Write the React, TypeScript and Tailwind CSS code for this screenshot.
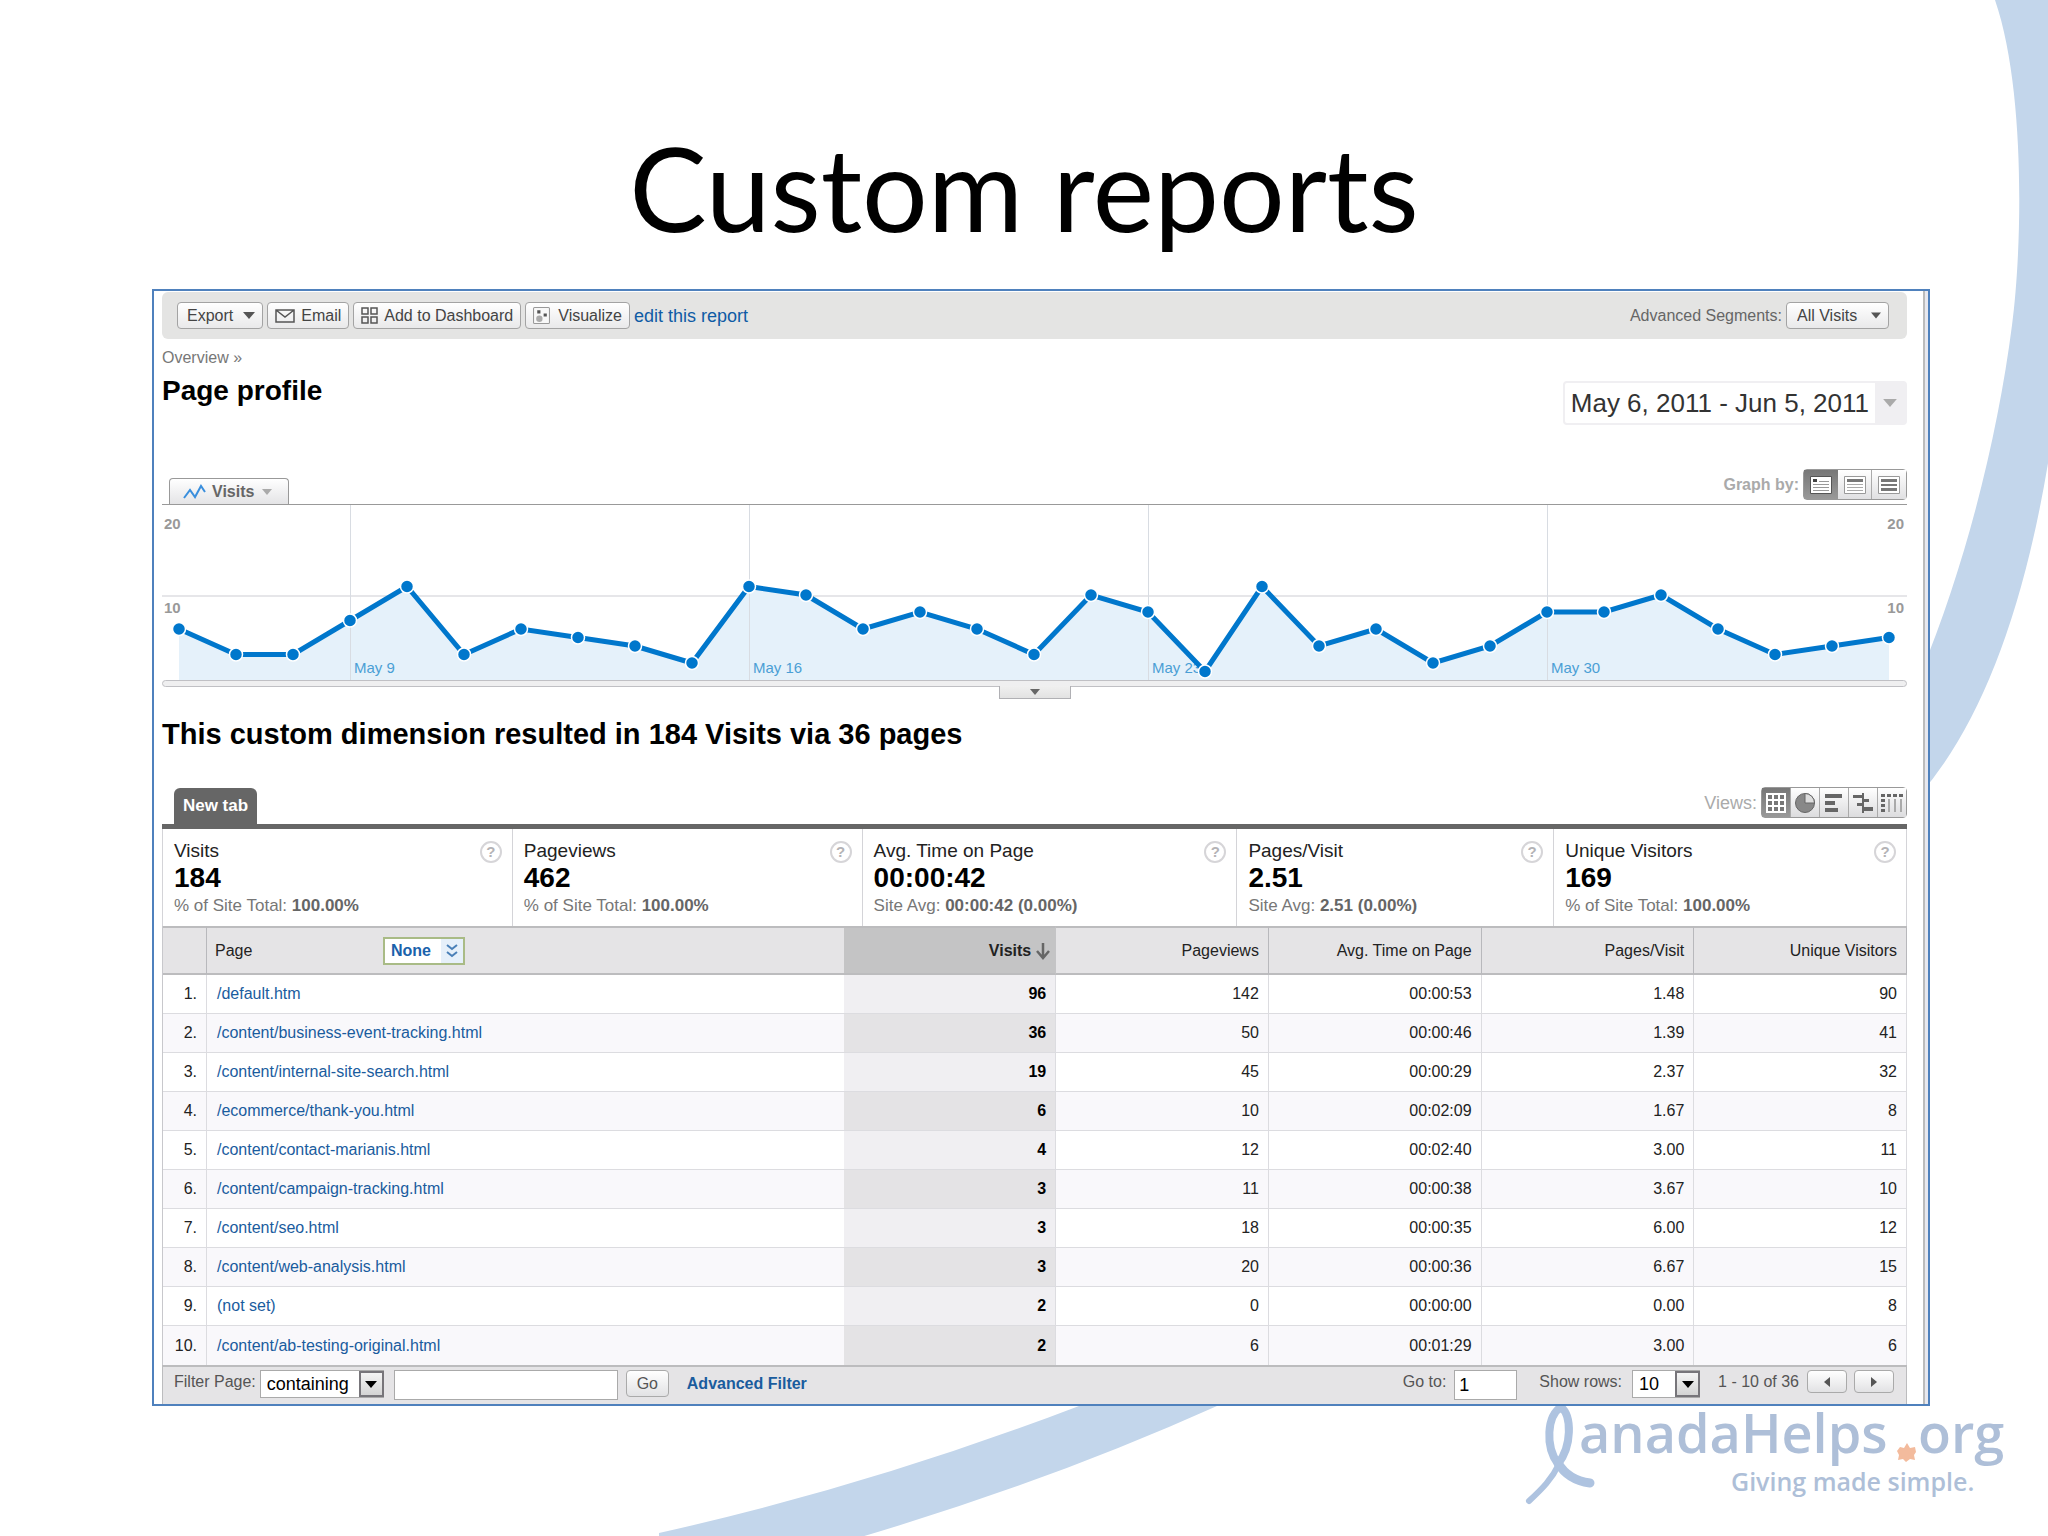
import type { ReactNode } from 'react'

const visits = [
  6, 3, 3, 7, 11, 3, 6, 5, 4, 2, 11, 10, 6, 8, 6, 3, 10, 8, 1, 11, 4, 6, 2, 4, 8, 8, 10, 6, 3, 4, 5,
]

const weeks = [
  { index: 3, label: 'May 9' },
  { index: 10, label: 'May 16' },
  { index: 17, label: 'May 23' },
  { index: 24, label: 'May 30' },
]

const metrics = [
  { name: 'Visits', value: '184', note: '% of Site Total:', total: '100.00%' },
  { name: 'Pageviews', value: '462', note: '% of Site Total:', total: '100.00%' },
  { name: 'Avg. Time on Page', value: '00:00:42', note: 'Site Avg:', total: '00:00:42 (0.00%)' },
  { name: 'Pages/Visit', value: '2.51', note: 'Site Avg:', total: '2.51 (0.00%)' },
  { name: 'Unique Visitors', value: '169', note: '% of Site Total:', total: '100.00%' },
]

const rows = [
  ['/default.htm', '96', '142', '00:00:53', '1.48', '90'],
  ['/content/business-event-tracking.html', '36', '50', '00:00:46', '1.39', '41'],
  ['/content/internal-site-search.html', '19', '45', '00:00:29', '2.37', '32'],
  ['/ecommerce/thank-you.html', '6', '10', '00:02:09', '1.67', '8'],
  ['/content/contact-marianis.html', '4', '12', '00:02:40', '3.00', '11'],
  ['/content/campaign-tracking.html', '3', '11', '00:00:38', '3.67', '10'],
  ['/content/seo.html', '3', '18', '00:00:35', '6.00', '12'],
  ['/content/web-analysis.html', '3', '20', '00:00:36', '6.67', '15'],
  ['(not set)', '2', '0', '00:00:00', '0.00', '8'],
  ['/content/ab-testing-original.html', '2', '6', '00:01:29', '3.00', '6'],
]

function Caret({ className }: { className: string }) {
  return (
    <svg viewBox="0 0 12 7" className={className} fill="currentColor" aria-hidden="true">
      <path d="M0 0h12L6 7z" />
    </svg>
  )
}

function ToolbarButton({ children }: { children: ReactNode }) {
  return (
    <button className="flex h-[27px] items-center rounded-sm border border-[#a3a3a3] bg-gradient-to-b from-white to-[#e9e9ea] px-[7px] text-base leading-5 whitespace-nowrap text-[#444]">
      {children}
    </button>
  )
}

function Swoosh() {
  return (
    <svg
      className="absolute inset-0 h-full w-full"
      viewBox="0 0 2048 1536"
      preserveAspectRatio="none"
      fill="#c3d6eb"
      aria-hidden="true"
    >
      <path d="M1995 0C2026 90 2022 250 2012 325C1998 434 1967 561 1920 675V794Q2010 690 2048 463V0Z" />
      <path d="M1100 1397L1079 1405Q870 1485 659 1532V1536H861Q1050 1480 1217 1405L1230 1397Z" />
    </svg>
  )
}

function Logo() {
  return (
    <svg
      className="absolute right-0 bottom-0 h-[146px] w-[548px]"
      viewBox="1500 1390 548 146"
      role="img"
      aria-label="CanadaHelps.org, Giving made simple."
    >
      <g fill="none" stroke="#aec3e0" strokeLinecap="round">
        <path strokeWidth="8" d="M1561 1406C1547 1415 1545 1445 1558 1463C1572 1445 1572 1415 1561 1406" />
        <path strokeWidth="6" d="M1559 1463C1552 1478 1542 1488 1529 1500" />
        <path strokeWidth="9" d="M1558 1462C1565 1474 1575 1480 1590 1482" />
      </g>
      <g fill="#aebfd8" className="font-['Open_Sans',sans-serif] font-semibold">
        <text x="1579" y="1452" fontSize="54">anadaHelps</text>
        <text x="1918" y="1452" fontSize="54">org</text>
        <text x="1731" y="1490" fontSize="25">Giving made simple.</text>
      </g>
      <path
        fill="#f3bb9d"
        d="M1907 1442l3 5 5-1 1 5-2 3 1 5-5-1-4 3-3-3-5 1 1-5-2-4 3-4 4 1z"
      />
    </svg>
  )
}

function Toolbar() {
  return (
    <div className="flex h-[47px] items-center justify-between rounded-md bg-[#e4e4e3] pr-[18px] pl-[15px]">
      <div className="flex items-center gap-1">
        <ToolbarButton>
          <span className="pl-0.5">Export</span>
          <Caret className="ml-2.5 h-[7px] w-3 text-[#555]" />
        </ToolbarButton>
        <ToolbarButton>
          <svg viewBox="0 0 20 14" className="mr-1.5 h-3.5 w-5" fill="none" stroke="#555" strokeWidth="1.5" aria-hidden="true">
            <path d="M1 1h18v12H1zM1 1l9 7 9-7" />
          </svg>
          Email
        </ToolbarButton>
        <ToolbarButton>
          <svg viewBox="0 0 17 17" className="mr-1.5 size-[17px]" fill="none" stroke="#555" strokeWidth="1.5" aria-hidden="true">
            <path d="M1 1h6v6H1zM10 1h6v6h-6zM1 10h6v6H1zM10 10h6v6h-6z" />
          </svg>
          Add to Dashboard
        </ToolbarButton>
        <ToolbarButton>
          <svg viewBox="0 0 16 16" className="mr-2 size-[17px]" aria-hidden="true">
            <rect x="0.5" y="0.5" width="15" height="15" rx="1" fill="#f8f8f8" stroke="#999" />
            <circle cx="6" cy="11" r="3" fill="#aaa" />
            <path d="M4 3h3v3H4zM10 6h3v3h-3z" fill="#555" />
          </svg>
          Visualize
        </ToolbarButton>
        <a href="#edit" className="text-lg leading-6 text-[#0f5ba5]">edit this report</a>
      </div>
      <div className="flex items-center gap-1">
        <label htmlFor="segment" className="text-base leading-5 text-[#666]">Advanced Segments:</label>
        <div className="relative">
          <select
            id="segment"
            className="block h-[27px] w-[103px] appearance-none rounded-sm border border-[#a3a3a3] bg-gradient-to-b from-white to-[#e9e9ea] pl-2.5 text-base leading-5 text-[#444]"
          >
            <option>All Visits</option>
          </select>
          <Caret className="pointer-events-none absolute top-2.5 right-2 h-[7px] w-2.5 text-[#555]" />
        </div>
      </div>
    </div>
  )
}

function GraphBy() {
  return (
    <div className="mb-1 flex items-center gap-1">
      <span className="text-base leading-5 font-bold text-[#aaa]">Graph by:</span>
      <div className="flex h-[31px] rounded-sm border border-[#999]">
        <button aria-label="Day" className="flex w-[34px] items-center justify-center bg-gradient-to-b from-[#777] to-[#999]">
          <svg viewBox="0 0 22 18" className="h-[18px] w-[22px]" aria-hidden="true">
            <path fill="#fff" stroke="#555" d="M0.5 0.5h21v17h-21z" />
            <path fill="#444" d="M3 3h4v3H3z" />
            <path stroke="#999" d="M9 5.5h10M3 8.5h16M3 11.5h16M3 14.5h16" />
          </svg>
        </button>
        <button aria-label="Week" className="flex w-[34px] items-center justify-center border-r border-[#aaa] bg-gradient-to-b from-white to-[#e0e0e2]">
          <svg viewBox="0 0 22 18" className="h-[18px] w-[22px]" aria-hidden="true">
            <path fill="#fff" stroke="#999" d="M0.5 0.5h21v17h-21z" />
            <path fill="#777" d="M3 3h16v3H3z" />
            <path stroke="#aaa" d="M3 8.5h16M3 11.5h16M3 14.5h16" />
          </svg>
        </button>
        <button aria-label="Month" className="flex w-[34px] items-center justify-center bg-gradient-to-b from-white to-[#e0e0e2]">
          <svg viewBox="0 0 22 18" className="h-[18px] w-[22px]" aria-hidden="true">
            <path fill="#fff" stroke="#999" d="M0.5 0.5h21v17h-21z" />
            <path fill="#777" d="M3 3h16v3H3zM3 8h16v2H3zM3 12h16v3H3z" />
          </svg>
        </button>
      </div>
    </div>
  )
}

function VisitsChart() {
  const x = (i: number) => 17 + i * 57
  const y = (v: number) => 175 - v * 8.5
  const line = visits.map((v, i) => `${x(i)},${y(v)}`).join(' ')

  return (
    <svg viewBox="0 0 1745 175" className="block h-auto w-full font-['Liberation_Sans',sans-serif]" role="img" aria-label="Visits per day">
      <path stroke="#dedee2" strokeWidth="1.5" d="M0 91h1745" />
      <polygon fill="#e5f1fa" points={`17,175 ${line} ${x(30)},175`} />
      {weeks.map((week) => (
        <g key={week.label}>
          <path stroke="#d8dce2" d={`M${x(week.index) + 0.5} 0v175`} />
          <text x={x(week.index) + 4} y="168" fontSize="15" fill="#4b9fd5">{week.label}</text>
        </g>
      ))}
      <polyline fill="none" stroke="#0077cc" strokeWidth="5" points={line} />
      {visits.map((v, i) => (
        <circle key={i} cx={x(i)} cy={y(v)} r="6.5" fill="#0077cc" stroke="#fff" strokeWidth="1.5" />
      ))}
      <g fontSize="15" fontWeight="bold" fill="#999">
        <text x="2" y="24">20</text>
        <text x="2" y="108">10</text>
        <text x="1742" y="24" textAnchor="end">20</text>
        <text x="1742" y="108" textAnchor="end">10</text>
      </g>
    </svg>
  )
}

function Views() {
  const button = 'flex w-[29px] items-center justify-center border-l border-[#aaa] bg-gradient-to-b from-white to-[#dcdcde]'
  const icon = 'h-[22px] w-[22px]'

  return (
    <div className="mb-1.5 flex items-center gap-1">
      <span className="text-lg leading-6 text-[#aaa]">Views:</span>
      <div className="flex h-[31px] rounded-sm border border-[#999]">
        <button aria-label="Table" className="flex w-7 items-center justify-center bg-gradient-to-b from-[#777] to-[#999]">
          <svg viewBox="0 0 22 22" className={icon} aria-hidden="true">
            <path fill="#fff" d="M1 1h20v20H1z" />
            <path fill="#777" d="M3 3h4v4H3zM9 3h4v4H9zM15 3h4v4h-4zM3 9h4v4H3zM9 9h4v4H9zM15 9h4v4h-4zM3 15h4v4H3zM9 15h4v4H9zM15 15h4v4h-4z" />
          </svg>
        </button>
        <button aria-label="Percentage" className={button}>
          <svg viewBox="0 0 22 22" className={icon} aria-hidden="true">
            <circle cx="11" cy="11" r="9.5" fill="#888" stroke="#666" />
            <path fill="#ddd" stroke="#666" d="M11 11V1.500A9.500 9.500 0 0 1 20.500 11z" />
          </svg>
        </button>
        <button aria-label="Performance" className={button}>
          <svg viewBox="0 0 22 22" className={icon} fill="#666" aria-hidden="true">
            <path d="M2 2h17v4H2zM2 9h10v4H2zM2 16h13v4H2z" />
          </svg>
        </button>
        <button aria-label="Comparison" className={button}>
          <svg viewBox="0 0 22 22" className={icon} fill="#666" aria-hidden="true">
            <path d="M10 1h2v20h-2zM1 3h9v3H1zM12 7h5v3h-5zM5 11h5v3H5zM12 15h9v4h-9z" />
          </svg>
        </button>
        <button aria-label="Pivot" className={button}>
          <svg viewBox="0 0 24 22" className="h-[22px] w-6" fill="#666" aria-hidden="true">
            <path d="M1 2h4v3H1zM7 2h4v3H7zM13 2h4v3h-4zM19 2h4v3h-4zM1 7h4v3H1zM1 12h4v3H1zM1 17h4v3H1z" />
            <path d="M8 7h2v13H8zM14 7h2v13h-2zM20 7h2v13h-2z" fill="#aaa" />
          </svg>
        </button>
      </div>
    </div>
  )
}

function Metrics() {
  return (
    <div className="grid h-[97px] grid-cols-[350fr_350fr_375fr_317fr_353fr] border-r border-[#d4d4d8]">
      {metrics.map((metric) => (
        <div key={metric.name} className="flex justify-between border-l border-[#d4d4d8] pt-[11px] pr-2.5 pl-[11px]">
          <div>
            <div className="text-[19px] leading-[22px] text-[#222]">{metric.name}</div>
            <div className="text-[28px] leading-8 font-bold text-black">{metric.value}</div>
            <div className="text-[17px] leading-6 text-[#777]">
              {metric.note} <b className="text-[#666]">{metric.total}</b>
            </div>
          </div>
          <button
            aria-label={`About ${metric.name}`}
            className="mt-px flex size-[22px] items-center justify-center rounded-full border-2 border-[#d6d5d8] text-[15px] leading-4 font-bold text-[#b4b3b6]"
          >
            ?
          </button>
        </div>
      ))}
    </div>
  )
}

function PageTable() {
  const head = 'border-r border-[#b8b8bc] pr-[9px] text-right font-normal'

  return (
    <table className="w-full table-fixed border-separate border-spacing-0 border-l border-[#c8c8cc] text-base leading-5">
      <colgroup>
        <col className="w-[44px]" />
        <col className="w-[36.5%]" />
        <col />
        <col />
        <col />
        <col />
        <col />
      </colgroup>
      <thead>
        <tr className="h-[49px] bg-[#e5e4e6] text-[#222] [&>th]:border-t-2 [&>th]:border-b-2 [&>th]:border-y-[#bcbcbe]">
          <th className="border-r border-[#b8b8bc]" aria-label="Rank" />
          <th className="pl-2 text-left font-normal">
            <div className="flex items-center">
              <span className="w-[168px]">Page</span>
              <div className="relative">
                <select
                  aria-label="Secondary dimension"
                  className="block h-7 w-[82px] appearance-none border-2 border-[#a9bb86] bg-white pl-1.5 text-base leading-5 font-bold text-[#1a62ab]"
                >
                  <option>None</option>
                </select>
                <span className="pointer-events-none absolute top-0.5 right-0.5 flex h-6 w-[22px] items-center justify-center bg-[#e6f0fa]">
                  <svg viewBox="0 0 12 14" className="h-3.5 w-3" fill="none" stroke="#4a80b8" strokeWidth="2" aria-hidden="true">
                    <path d="M1 1l5 4 5-4M1 8l5 4 5-4" />
                  </svg>
                </span>
              </div>
            </div>
          </th>
          <th className="border-r border-[#c4c4c6] bg-[#c4c4c5] pr-1 font-bold">
            <div className="flex items-center justify-end gap-1">
              Visits
              <svg viewBox="0 0 16 18" className="h-[18px] w-4" fill="none" stroke="#666" strokeWidth="2.5" aria-hidden="true">
                <path d="M8 1v15M2 9l6 7 6-7" />
              </svg>
            </div>
          </th>
          <th className={head}>Pageviews</th>
          <th className={head}>Avg. Time on Page</th>
          <th className={head}>Pages/Visit</th>
          <th className={head}>Unique Visitors</th>
        </tr>
      </thead>
      <tbody>
        {rows.map(([page, count, ...rest], i) => (
          <tr key={page} className="group h-[39px] text-[#222] even:bg-[#f9f8fb] [&>td]:border-b [&>td]:border-b-[#dcdce0] last:[&>td]:border-b-0">
            <td className="border-r border-r-[#dcdce0] pr-[9px] text-right">{i + 1}.</td>
            <td className="pl-2.5">
              <a href="#page" className="text-[#1a5c9e]">{page}</a>
            </td>
            <td className="border-r border-r-[#dcdce0] bg-[#f0eff2] pr-[9px] text-right font-bold text-black group-even:bg-[#e4e3e5]">
              {count}
            </td>
            {rest.map((value, j) => (
              <td key={j} className="border-r border-r-[#dcdce0] pr-[9px] text-right">{value}</td>
            ))}
          </tr>
        ))}
      </tbody>
    </table>
  )
}

function SelectArrow() {
  return (
    <span className="pointer-events-none absolute top-px right-0 flex h-[26px] w-[25px] items-center justify-center border-2 border-[#77757a] bg-gradient-to-b from-[#f4f4f4] to-[#d4d4d4]">
      <Caret className="h-[7px] w-3 text-black" />
    </span>
  )
}

function Footer() {
  return (
    <div className="flex h-[39px] justify-between border-x border-t-2 border-[#bcbcbe] bg-[#e5e4e6] pt-[3px] pr-3 pl-[11px] text-base text-[#555]">
      <div className="flex items-start">
        <label htmlFor="match" className="leading-6">Filter Page:</label>
        <div className="relative ml-1">
          <select id="match" className="block h-7 w-[124px] appearance-none border border-[#aaa] bg-white pl-1.5 text-lg leading-6 text-black">
            <option>containing</option>
          </select>
          <SelectArrow />
        </div>
        <input aria-label="Filter text" type="text" className="ml-2.5 h-[30px] w-[224px] border border-[#aaa] bg-white px-1" />
        <button className="ml-2 h-[27px] w-[43px] rounded-sm border border-[#aaa] bg-gradient-to-b from-white to-[#e2e2e4] leading-5">Go</button>
        <a href="#filter" className="ml-[18px] leading-7 font-bold text-[#1a5c9e]">Advanced Filter</a>
      </div>
      <div className="flex items-start">
        <label htmlFor="goto" className="leading-6">Go to:</label>
        <input id="goto" type="text" defaultValue="1" className="ml-2 h-[30px] w-[63px] border border-[#aaa] bg-white px-1 text-lg text-black" />
        <label htmlFor="count" className="ml-[22px] leading-6">Show rows:</label>
        <div className="relative ml-2.5">
          <select id="count" className="block h-7 w-[68px] appearance-none border border-[#aaa] bg-white pl-1.5 text-lg leading-6 text-black">
            <option>10</option>
          </select>
          <SelectArrow />
        </div>
        <span className="ml-[18px] leading-6">1 - 10 of 36</span>
        <button aria-label="Previous" className="ml-2 flex h-[23px] w-10 items-center justify-center rounded-sm border border-[#aaa] bg-gradient-to-b from-white to-[#e2e2e4]">
          <svg viewBox="0 0 6 10" className="h-2.5 w-1.5" fill="#555" aria-hidden="true"><path d="M6 0v10L0 5z" /></svg>
        </button>
        <button aria-label="Next" className="ml-[7px] flex h-[23px] w-10 items-center justify-center rounded-sm border border-[#aaa] bg-gradient-to-b from-white to-[#e2e2e4]">
          <svg viewBox="0 0 6 10" className="h-2.5 w-1.5" fill="#555" aria-hidden="true"><path d="M0 0v10l6-5z" /></svg>
        </button>
      </div>
    </div>
  )
}

export default function App() {
  return (
    <div className="relative min-h-screen overflow-hidden bg-white pb-[131px] font-['Liberation_Sans',Arial,sans-serif]">
      <Swoosh />
      <Logo />

      <h1 className="relative pt-[118px] pb-[31px] text-center font-['Lato',sans-serif] text-[116px] leading-[140px] text-black">
        Custom reports
      </h1>

      {/* Report window */}
      <main className="relative mr-[118px] ml-[152px] flex border-2 border-[#4f81bd] bg-white">
        <div className="min-w-0 flex-1 pt-px pr-4 pl-2">
          <Toolbar />

          <div className="flex items-start justify-between">
            <div className="pt-[9px]">
              <a href="#overview" className="block text-base leading-5 text-[#777]">Overview »</a>
              <h2 className="mt-[7px] text-[28px] leading-8 font-bold text-black">Page profile</h2>
            </div>
            <button className="mt-[42px] flex h-11 items-stretch rounded-sm border-2 border-[#f0eff2] bg-white text-[26px] leading-10 text-[#333]">
              <span className="px-1.5">May 6, 2011 - Jun 5, 2011</span>
              <span className="flex w-[30px] items-center justify-center bg-[#f0eff2]">
                <Caret className="h-2 w-4 text-[#aaa]" />
              </span>
            </button>
          </div>

          {/* Graph */}
          <div className="mt-11 flex items-end justify-between border-b border-[#999]">
            <button className="ml-[7px] flex h-[26px] w-[120px] items-center rounded-t-sm border border-b-0 border-[#999] bg-gradient-to-b from-white to-[#e4e4e6] pl-3 text-base leading-5 font-bold text-[#666]">
              <svg viewBox="0 0 24 16" className="mr-1.5 h-4 w-6" fill="none" stroke="#3a8fdd" strokeWidth="2" aria-hidden="true">
                <path d="M2 14l6-8 5 7 6-11 4 6" />
              </svg>
              Visits
              <Caret className="ml-2 h-1.5 w-2.5 text-[#aaa]" />
            </button>
            <GraphBy />
          </div>
          <VisitsChart />
          <div className="relative h-[7px] rounded-sm border border-[#c0c0c4] bg-[#efeff0]">
            <button
              aria-label="Collapse graph"
              className="absolute top-[5px] left-1/2 flex h-[13px] w-[72px] -translate-x-1/2 items-center justify-center border border-t-0 border-[#b0b0b4] bg-gradient-to-b from-[#f0f0f0] to-[#e2e2e2]"
            >
              <Caret className="h-1.5 w-2.5 text-[#666]" />
            </button>
          </div>

          <h2 className="mt-[31px] text-[29px] leading-8 font-bold text-black">
            This custom dimension resulted in 184 Visits via 36 pages
          </h2>

          {/* Data */}
          <div className="mt-[37px] flex items-end justify-between border-b-[5px] border-[#666]">
            <button className="ml-3 h-9 w-[83px] rounded-t-md bg-[#666] text-[17px] leading-6 font-bold text-white">New tab</button>
            <Views />
          </div>
          <Metrics />
          <PageTable />
          <Footer />
        </div>
        <div className="w-[5px] border-l-2 border-[#bbb] bg-[#e8e8ee]" />
      </main>
    </div>
  )
}
